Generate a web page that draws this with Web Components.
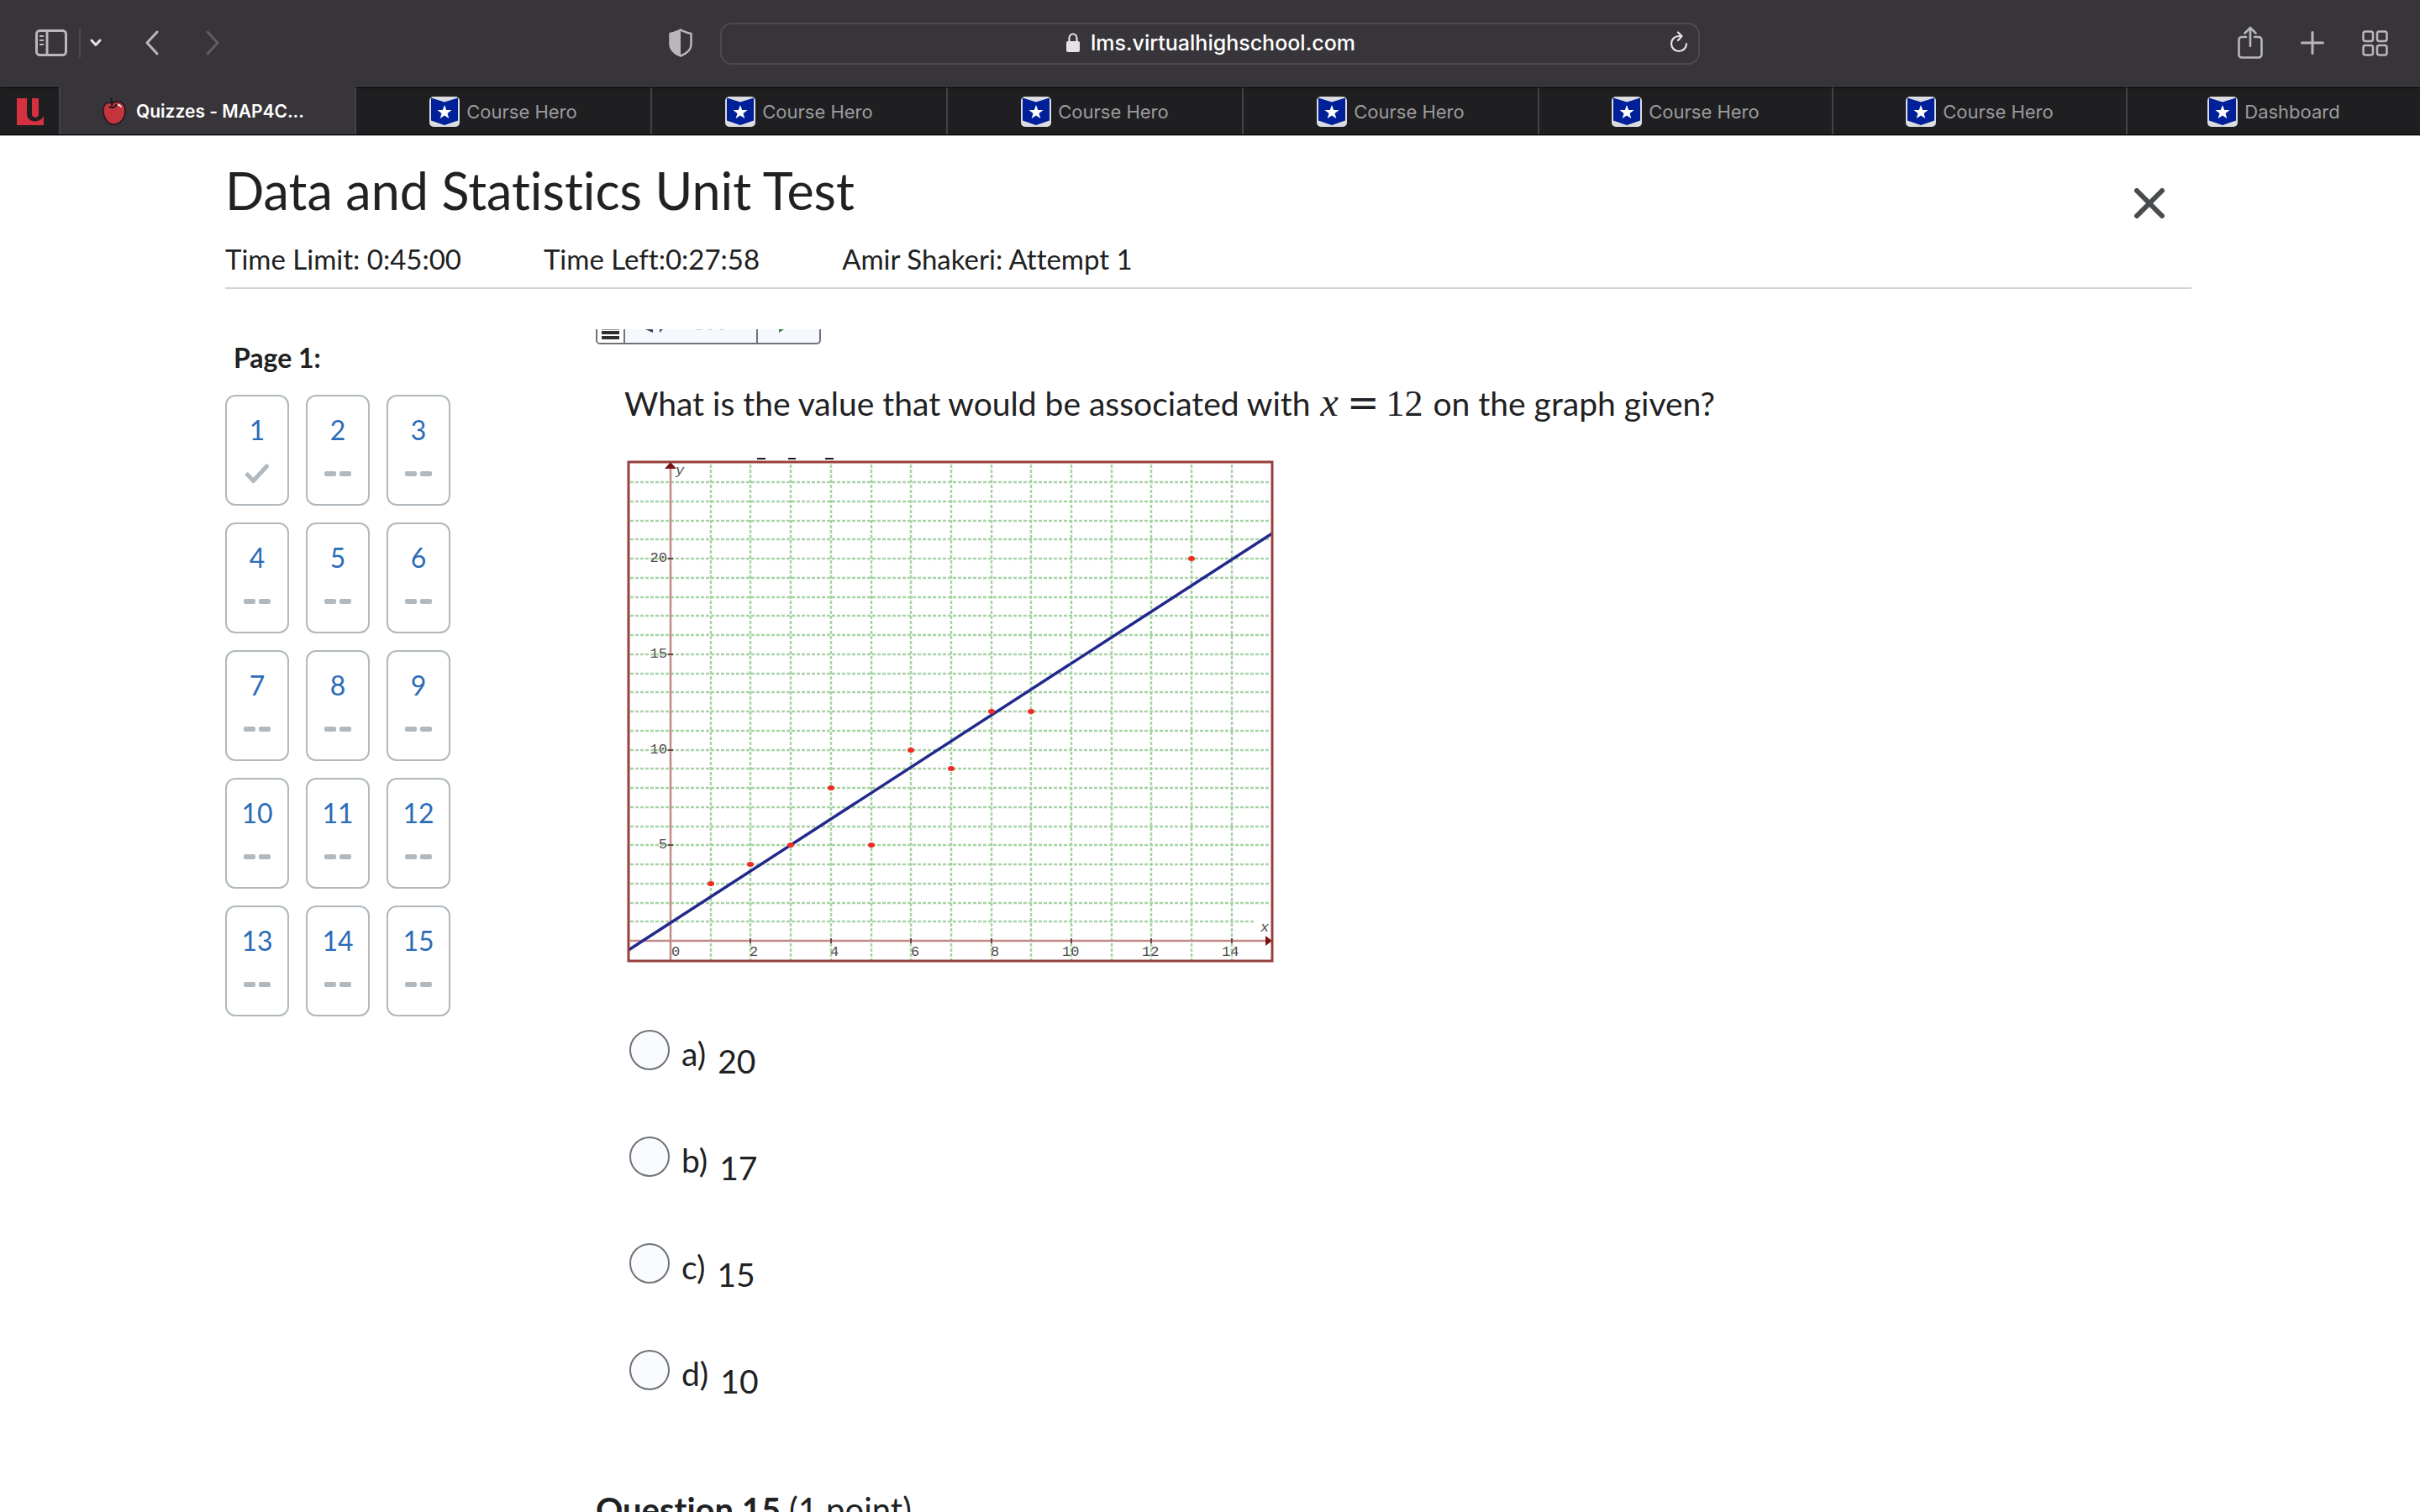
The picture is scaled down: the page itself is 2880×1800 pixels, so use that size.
<!DOCTYPE html>
<html lang="en">
<head>
<meta charset="utf-8">
<title>Quizzes - MAP4C</title>
<style>
  body {
    margin: 0;
    height: 100vh;
    overflow: hidden;
    background: #fff;
    color: #202122;
    font-family: Lato, sans-serif;
    font-size: 33px;
    font-variant-ligatures: none;
    line-height: 40px;
  }
</style>
</head>
<body>
<browser-toolbar url="lms.virtualhighschool.com"></browser-toolbar>
<browser-tabs>
  <browser-tab icon="u" label="Pinned tab" pinned></browser-tab>
  <browser-tab icon="apple" active>Quizzes - MAP4C...</browser-tab>
  <browser-tab icon="hero">Course Hero</browser-tab>
  <browser-tab icon="hero">Course Hero</browser-tab>
  <browser-tab icon="hero">Course Hero</browser-tab>
  <browser-tab icon="hero">Course Hero</browser-tab>
  <browser-tab icon="hero">Course Hero</browser-tab>
  <browser-tab icon="hero">Course Hero</browser-tab>
  <browser-tab icon="hero">Dashboard</browser-tab>
</browser-tabs>
<quiz-page>
  <quiz-header slot="header">
    <span slot="title">Data and Statistics Unit Test</span>
    <span>Time Limit: 0:45:00</span>
    <span>Time Left:0:27:58</span>
    <span>Amir Shakeri: Attempt 1</span>
  </quiz-header>
  <quiz-nav slot="nav" count="15" answered="1">Page 1:</quiz-nav>
  <read-bar></read-bar>
  <quiz-question>
    <span slot="prompt">What is the value that would be associated with <math-text><i>x</i><b>=</b>12</math-text> on the graph given?</span>
    <scatter-graph slot="figure"></scatter-graph>
    <quiz-option letter="a">20</quiz-option>
    <quiz-option letter="b">17</quiz-option>
    <quiz-option letter="c">15</quiz-option>
    <quiz-option letter="d">10</quiz-option>
  </quiz-question>
  <question-heading points="(1 point)">Question 15</question-heading>
</quiz-page>

<script>
(function () {
  function define(name, render, after) {
    customElements.define(name, class extends HTMLElement {
      constructor() {
        super();
        this.attachShadow({ mode: 'open' });
      }
      connectedCallback() {
        this.shadowRoot.innerHTML = render(this);
        if (after) after(this);
      }
    });
  }

  var BUTTON_RESET = `
  button {
    display: flex; margin: 0; padding: 0; border: 0;
    background: none; color: inherit; font: inherit; cursor: pointer;
  }
  svg { display: block; }`;

  // Window chrome
  define('browser-toolbar', el => `
<style>
  :host {
    display: grid;
    grid-template-columns: 857fr 1166fr 857fr;
    align-items: center;
    height: 104px;
    background: #37353a;
    color: #b9b7bc;
    font-family: Inter, sans-serif;
  }
  ${BUTTON_RESET}
  .side { display: flex; align-items: center; padding-bottom: 2px; }
  .left { padding-left: 42px; padding-right: 33px; }
  .right { justify-content: flex-end; gap: 45px; padding-right: 38px; }
  .rule { width: 2px; height: 36px; margin: 0 11px 0 14px; background: #4a484d; }
  .back { margin-left: 52px; }
  .forward { margin-left: 56px; color: #5f5d62; }
  .shield { margin-left: auto; }
  .address {
    display: grid; grid-template-columns: 1fr auto 1fr; align-items: center;
    box-sizing: border-box; height: 50px; padding: 0 12px 2px;
    border: 2px solid #4c4a4f; border-radius: 14px;
    color: #e4e2e6;
  }
  .site { grid-column: 2; display: flex; align-items: center; gap: 12px; }
  input {
    width: 314px; margin: 0; padding: 0; border: 0; outline: 0; background: none;
    color: #fff; font: 500 25px/32px Inter, sans-serif;
  }
  .reload { justify-self: end; }
</style>
<div class="side left">
  <button aria-label="Show sidebar"><svg width="38" height="32" viewBox="0 0 38 32" fill="none" stroke="currentColor" stroke-width="3"><rect x="1.5" y="1.5" width="35" height="29" rx="4"/><path d="M14 2v28"/><path d="M5 8h5M5 13h5M5 18h5" stroke-width="2"/></svg></button>
  <span class="rule"></span>
  <button aria-label="Tab groups"><svg width="14" height="10" viewBox="0 0 14 10" fill="none" stroke="#e4e2e6" stroke-width="3" stroke-linecap="round" stroke-linejoin="round"><path d="M2 2l5 5.500 5-5.500"/></svg></button>
  <button class="back" aria-label="Back"><svg width="16" height="30" viewBox="0 0 16 30" fill="none" stroke="currentColor" stroke-width="3" stroke-linecap="round" stroke-linejoin="round"><path d="M14 2L2 15l12 13"/></svg></button>
  <button class="forward" aria-label="Forward"><svg width="16" height="30" viewBox="0 0 16 30" fill="none" stroke="currentColor" stroke-width="3" stroke-linecap="round" stroke-linejoin="round"><path d="M2 2l12 13L2 28"/></svg></button>
  <button class="shield" aria-label="Privacy report"><svg width="28" height="34" viewBox="0 0 28 34"><path d="M14 1.500C10 4 6 5 1.500 6v13c0 7 6 11 12.500 13.500C20.500 30 26.500 26 26.500 19V6C22 5 18 4 14 1.500z" fill="none" stroke="currentColor" stroke-width="2.500" stroke-linejoin="round"/><path d="M14 1.500C10 4 6 5 1.500 6v13c0 7 6 11 12.500 13.500z" fill="currentColor"/></svg></button>
</div>
<div class="address">
  <div class="site">
    <svg width="18" height="24" viewBox="0 0 18 24"><rect x="1" y="10" width="16" height="13" rx="2" fill="currentColor"/><path d="M4.500 11V6.500a4.500 5 0 0 1 9 0V11" fill="none" stroke="currentColor" stroke-width="2.200"/></svg>
    <input type="text" value="${el.getAttribute('url')}" aria-label="Address">
  </div>
  <button class="reload" aria-label="Reload"><svg width="22" height="28" viewBox="0 0 22 28" fill="none" stroke="currentColor" stroke-width="2.200" stroke-linecap="round" stroke-linejoin="round"><path d="M20 15a9 9 0 1 1-9-9h3M10 1.500L14.500 6 10 11"/></svg></button>
</div>
<div class="side right">
  <button aria-label="Share"><svg width="30" height="40" viewBox="0 0 30 40" fill="none" stroke="currentColor" stroke-width="2.600" stroke-linecap="round" stroke-linejoin="round"><path d="M10 13H5a3.500 3.500 0 0 0-3.500 3.500V34A3.500 3.500 0 0 0 5 37.500h20a3.500 3.500 0 0 0 3.500-3.500V16.500A3.500 3.500 0 0 0 25 13h-5M15 24V2.500M8.500 8.500L15 2l6.500 6.500"/></svg></button>
  <button aria-label="New tab"><svg width="28" height="28" viewBox="0 0 28 28" stroke="currentColor" stroke-width="3" stroke-linecap="round"><path d="M14 1.500v25M1.500 14h25"/></svg></button>
  <button aria-label="Tab overview"><svg width="31" height="31" viewBox="0 0 31 31" fill="none" stroke="currentColor" stroke-width="2.500"><rect x="1.500" y="1.500" width="11.500" height="11.500" rx="2.500"/><rect x="18" y="1.500" width="11.500" height="11.500" rx="2.500"/><rect x="1.500" y="18" width="11.500" height="11.500" rx="2.500"/><rect x="18" y="18" width="11.500" height="11.500" rx="2.500"/></svg></button>
</div>`);

  define('browser-tabs', () => `
<style>
  :host {
    display: grid;
    grid-template-columns: 70px repeat(5, 352fr) repeat(3, 350fr);
    height: 56px;
    background: #1f1f21;
    border-bottom: 1px solid #000;
    font-family: Inter, sans-serif;
  }
</style>
<slot></slot>`);

  var FAVICONS = {
    u: `<svg width="32" height="32" viewBox="0 0 32 32"><path d="M0 0h32v32H0z" fill="#d5313f"/><path d="M12 0v19c0 11 18 11 20 1V0h-6v19c0 5-8 5-8 0V0z" fill="#1f1f21"/></svg>`,
    apple: `<svg width="28" height="32" viewBox="0 0 28 32"><path d="M11 6C4 3 0 9 1 17c1 8 6 14 12 14 9 0 14-8 14-16C27 6 20 1 11 6z" fill="#c2353c" stroke="#1c1617" stroke-width="1.500"/><path d="M8 10c4 2 7 1 9-3M11 9C12 6 11 3 10 0" fill="none" stroke="#1c1617" stroke-width="2"/><path d="M18 7c3 0 5 2 5 5-1-2-3-3-5-3.500z" fill="#fff"/></svg>`,
    hero: `<svg width="36" height="36" viewBox="0 0 36 36"><rect width="36" height="36" rx="5" fill="#dcdde0"/><path d="M2 1.500l16 5 16-5v27l-16 5.500-16-5.500z" fill="#00209a"/><path d="M18 10l2.200 5.900 6.300.2-5 3.900 1.800 6.100-5.300-3.600-5.300 3.600 1.800-6.100-5-3.900 6.300-.2z" fill="#fff"/></svg>`
  };

  define('browser-tab', el => `
<style>
  :host {
    min-width: 0;
    border-top: 1px solid #000;
    border-left: 2px solid #434345;
    color: #9b9b9e;
    font-size: 22px;
    line-height: 28px;
  }
  :host([pinned]) { border-left-color: transparent; }
  :host([active]) { border-top-color: #37353a; background: #37353a; color: #fff; font-size: 21px; font-weight: 600; }
  a {
    display: flex; align-items: center; justify-content: center; gap: 8px;
    height: 100%; color: inherit; text-decoration: none; white-space: nowrap;
  }
  :host([active]) a { padding-right: 10px; gap: 12px; }
  svg { flex: none; }
</style>
<a href="#" ${el.hasAttribute('label') ? `aria-label="${el.getAttribute('label')}"` : ''}>${FAVICONS[el.getAttribute('icon')]}<slot></slot></a>`);

  // Quiz page
  define('quiz-page', () => `
<style>
  :host { display: block; padding: 29px 272px 0 268px; border-top: 1px solid #b5b5b5; }
  .body { display: grid; grid-template-columns: 441px 1fr; margin-top: 48px; }
</style>
<slot name="header"></slot>
<div class="body">
  <slot name="nav"></slot>
  <main><slot></slot></main>
</div>`);

  define('quiz-header', () => `
<style>
  :host {
    display: flex; justify-content: space-between; align-items: flex-start;
    padding-bottom: 14px; border-bottom: 2px solid #cdd5dc;
  }
  ${BUTTON_RESET}
  h1 { margin: 0 0 25px; font-size: 61px; line-height: 72px; font-weight: 400; }
  .meta { display: flex; gap: 98px; }
  button { margin: 33px 32px 0 0; color: #494c4e; }
</style>
<div>
  <h1><slot name="title"></slot></h1>
  <div class="meta"><slot></slot></div>
</div>
<button aria-label="Close"><svg width="36" height="36" viewBox="0 0 36 36" stroke="currentColor" stroke-width="6" stroke-linecap="round"><path d="M3 3l30 30M33 3L3 33"/></svg></button>`);

  define('quiz-nav', el => {
    var count = Number(el.getAttribute('count'));
    var answered = Number(el.getAttribute('answered'));
    var items = '';
    for (var i = 1; i <= count; i++) {
      items += `<quiz-nav-item number="${i}"${i <= answered ? ' answered' : ''}></quiz-nav-item>`;
    }
    return `
<style>
  :host { display: block; padding-top: 14px; }
  h2 { margin: 0 0 24px 10px; font-size: 32px; line-height: 40px; }
  nav { display: grid; grid-template-columns: repeat(3, 76px); gap: 20px; }
</style>
<h2><slot></slot></h2>
<nav>${items}</nav>`;
  });

  define('quiz-nav-item', el => `
<style>
  :host { display: block; font-size: 32px; }
  a {
    display: flex; flex-direction: column; align-items: center; gap: 20px;
    box-sizing: border-box; height: 132px; padding-top: 20px;
    border: 2px solid #b1b9be; border-radius: 12px;
    color: #2b6cb8; text-decoration: none;
  }
</style>
<a href="#">${el.getAttribute('number')}${el.hasAttribute('answered')
    ? `<svg width="32" height="24" viewBox="0 0 32 24" fill="none" stroke="#b1b9be" stroke-width="5" stroke-linecap="round" stroke-linejoin="round"><path d="M4.500 13l7 7.500L27.500 3"/></svg>`
    : `<svg width="32" height="24" viewBox="0 0 32 24" fill="#b1b9be"><rect y="9" width="14" height="6" rx="2"/><rect x="18" y="9" width="14" height="6" rx="2"/></svg>`}</a>`);

  // Lower edge of the text-to-speech bar, the rest is scrolled away
  define('read-bar', () => `
<style>
  :host {
    display: flex; width: 268px; height: 18px; box-sizing: border-box;
    border: solid #6c7378; border-width: 0 2px 2px; border-radius: 0 0 5px 5px;
    background: #f5f9fd; overflow: hidden;
  }
  ${BUTTON_RESET}
  button + button { border-left: 2px solid #6c7378; }
  .menu { width: 31px; background: #fff; }
  .listen { width: 158px; }
  .play { flex: 1; }
</style>
<button class="menu" aria-label="Menu"><svg width="31" height="16" fill="#2f2f30"><path d="M5 0h21v1H5z" fill="#8a8a8a"/><path d="M5 2h21v4H5zM5 8h21v4H5z"/></svg></button>
<button class="listen" aria-label="Listen"><svg width="130" height="16" fill="#403f66"><path d="M24 0h9v4z"/><path d="M41 0h4l-4 4z"/><path d="M85 0h6v1h-6zM99 0h4v1h-4zM113 0h4v1h-4z" fill="#c5c8cc"/></svg></button>
<button class="play" aria-label="Play"><svg width="60" height="16" fill="#2f7d3b"><path d="M25 0h6l-6 4z"/></svg></button>`);

  define('math-text', () => `
<style>
  :host { margin: 0 2px; font: 44px/0 "Liberation Serif", serif; }
  ::slotted(i) { font-size: 48px; }
  ::slotted(b) { margin: 0 8px 0 10px; font: 46px/0 "DejaVu Serif", serif; }
</style>
<slot></slot>`);

  define('quiz-question', () => `
<style>
  :host { display: block; margin-top: 47px; padding-left: 34px; font-size: 39px; line-height: 46px; }
  p { height: 46px; margin: 0 0 38px; white-space: nowrap; }
  fieldset { display: grid; gap: 67px; margin: 79px 0 0; padding: 0 0 0 6px; border: 0; }
</style>
<p><slot name="prompt"></slot></p>
<slot name="figure"></slot>
<fieldset aria-label="Answers"><slot></slot></fieldset>`);

  define('quiz-option', el => `
<style>
  :host { display: flex; align-items: flex-start; }
  input {
    appearance: none; box-sizing: border-box; width: 48px; height: 48px; margin: 0;
    border: 2px solid #6e7376; border-radius: 50%; background: #f9fbff;
  }
  input:checked { background: radial-gradient(#494c4e 10px, #f9fbff 11px); }
  label { display: flex; gap: 14px; padding: 5px 0 0 14px; }
  .value { padding-top: 9px; }
</style>
<input type="radio" id="choice" name="answer" value="${el.getAttribute('letter')}">
<label for="choice"><span>${el.getAttribute('letter')})</span><span class="value"><slot></slot></span></label>`,
  el => {
    // Radios sit in separate shadow roots, so clear the siblings by hand
    var input = el.shadowRoot.querySelector('input');
    input.addEventListener('change', () => {
      el.parentNode.querySelectorAll('quiz-option').forEach(other => {
        if (other !== el) other.shadowRoot.querySelector('input').checked = false;
      });
    });
  });

  define('question-heading', el => `
<style>
  :host { display: block; margin-top: 107px; }
  h2 { margin: 0; font-size: 40px; line-height: 46px; white-space: nowrap; }
  span { font-weight: 400; }
</style>
<h2><slot></slot> <span>${el.getAttribute('points')}</span></h2>`);

  // Scatter plot with a line of best fit
  var POINTS = [[1, 3], [2, 4], [3, 5], [4, 8], [5, 5], [6, 10], [7, 9], [8, 12], [9, 12], [13, 20]];

  define('scatter-graph', () => {
    var px = x => Math.round(55 + x * 47.700);
    var py = y => Math.round(579 - y * 22.750);
    var grid = '', ticks = '', labels = '', dots = '', i;
    for (i = 1; i <= 14; i++) grid += `M${px(i)} 12V602`;
    for (i = 1; i <= 24; i++) grid += `M7 ${py(i)}H${i === 1 ? 750 : 768}`;
    [[0, 56], [2, 149], [4, 245], [6, 341], [8, 436], [10, 521], [12, 616], [14, 711]].forEach(([v, x]) => {
      if (v) ticks += `M${px(v)} 576v6`;
      labels += `<text x="${x}" y="597">${v}</text>`;
    });
    [5, 10, 15, 20].forEach(v => {
      ticks += `M52 ${py(v)}h6`;
      labels += `<text x="51" y="${py(v) + 4}" text-anchor="end">${v}</text>`;
    });
    POINTS.forEach(([x, y]) => {
      dots += `<ellipse cx="${px(x)}" cy="${py(y)}" rx="4" ry="3"/>`;
    });
    return `
<style>
  :host { display: block; }
  svg { display: block; }
  text { font: 17px "Liberation Mono", monospace; fill: #4c4c4c; }
  .name { font-style: italic; }
</style>
<svg width="774" height="606" viewBox="0 0 774 606" role="img" aria-label="Scatter plot with line of best fit">
  <path d="M158 5h10M195 5h9M239 5h10" stroke="#151a26" stroke-width="2"/>
  <path d="${grid}" fill="none" stroke="#a9d3a6" stroke-width="2.500" stroke-dasharray="4 2"/>
  <path d="M55 12V602M7 579H768" stroke="#c08a88" stroke-width="2.500"/>
  <path d="${ticks}" stroke="#6b4545" stroke-width="2"/>
  <path d="M48 17l7-8 7 8zM763 573l8 6-8 6z" fill="#7a1414"/>
  ${labels}
  <text class="name" x="61" y="24">y</text>
  <text class="name" x="757" y="568">x</text>
  <path d="M5 590L771 94" stroke="#23298c" stroke-width="3.500"/>
  <g fill="#ee2d24">${dots}</g>
  <rect x="5" y="9" width="766" height="594" fill="none" stroke="#97403c" stroke-width="3"/>
</svg>`;
  });
})();
</script>
</body>
</html>
